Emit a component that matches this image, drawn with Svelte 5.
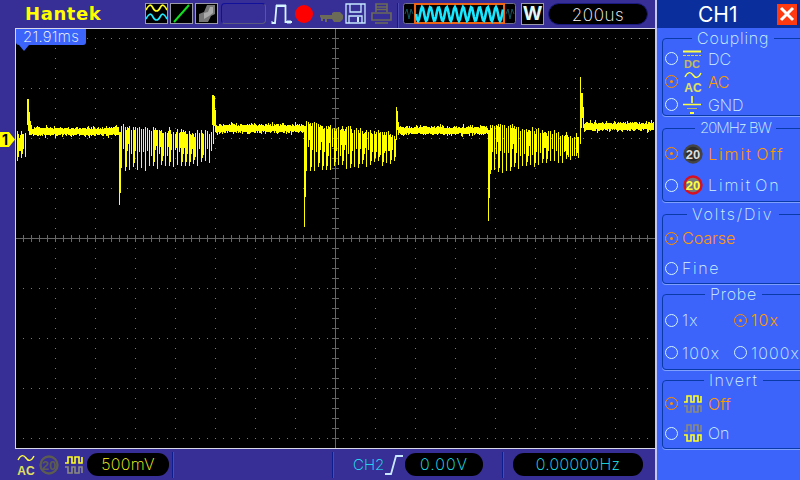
<script>
  // seeded noise so the trace is the same on every load
  let seed = 1234;
  function rnd() {
    seed = (seed * 16807) % 2147483647;
    return seed / 2147483647;
  }

  function col(x, a, b) {
    return `M${x + 0.5} ${a}V${b}`;
  }

  function band(from, to, base) {
    let d = '';
    for (let x = from; x < to; x++) {
      const up = rnd() < 0.25 ? 4 + rnd() * 3 : 3 + rnd() * 2;
      const down = rnd() < 0.18 ? 4 + rnd() * 2 : 2 + rnd() * 2;
      d += col(x, Math.round(base - up), Math.round(base + down));
    }
    return d;
  }

  // ringing after each edge: long teeth about 4px apart, short ones between
  function burst(from, to, topA, topB, botA, botB) {
    let d = '';
    for (let x = from; x < to; x++) {
      const t = (x - from) / (to - from);
      const top = topA + (topB - topA) * t;
      const bot = botA + (botB - botA) * t;
      const phase = (x - from) % 4;
      if (phase === 0) {
        const a = Math.round(top + rnd() * 5);
        const b = Math.round(bot - rnd() * 5);
        d += col(x, a, b);
        if (rnd() < 0.5) d += col(x + 1, a + 3, b - 4);
      }
      if (phase === 2) d += col(x, Math.round(top + rnd() * 7), Math.round((top + bot) / 2 + rnd() * 10));
      if (phase === 3 && rnd() < 0.4) d += col(x, Math.round(top + 4), Math.round(top + 20));
    }
    return d;
  }

  const trace = [
    burst(17, 27, 131, 131, 163, 160),
    col(27, 99, 125), col(28, 99, 131), col(29, 112, 135), col(30, 121, 135), col(31, 125, 135),
    band(32, 119, 132),
    col(119, 132, 205), col(120, 132, 193),
    burst(121, 213, 124, 130, 173, 165),
    col(212, 95, 125), col(213, 95, 144), col(214, 96, 126), col(215, 110, 132),
    band(216, 304, 129),
    col(304, 126, 227), col(305, 126, 197),
    burst(306, 396, 120, 132, 172, 165),
    col(396, 107, 140), col(397, 111, 130), col(398, 122, 135),
    band(399, 488, 131),
    col(488, 130, 221), col(489, 130, 198),
    burst(490, 580, 121, 133, 175, 160),
    col(580, 77, 144), col(581, 93, 128), col(582, 93, 118), col(583, 107, 128),
    band(584, 654, 127)
  ].join('');

  let dots = '';
  for (let y = 38; y < 448; y += 50) {
    for (let x = 23; x < 654; x += 8) dots += `M${x} ${y + 0.5}h1`;
  }
  for (let x = 55; x < 654; x += 40) {
    for (let y = 38; y < 448; y += 10) dots += `M${x} ${y + 0.5}h1`;
  }

  let ticks = '';
  for (let x = 23; x < 654; x += 8) ticks += `M${x + 0.5} 235V242`;
  for (let y = 38; y < 448; y += 10) ticks += `M332 ${y + 0.5}H339`;

  let wave = 'M416 14';
  for (let x = 416; x <= 503; x += 1) {
    wave += `L${x} ${(14 + Math.sin(((x - 416) / 8.2) * Math.PI * 2) * 7).toFixed(1)}`;
  }
</script>

{#snippet invertIcon(top, bottom)}
  <svg width="20" height="20" viewBox="0 0 20 20" fill="none" stroke-width="1.6">
    <path d="M0 8h3V2h4v6h3V2h4v6h3V2" transform="translate(1 0)" stroke={top} />
    <path d="M0 12h3v6h4v-6h3v6h4v-6h3v6" transform="translate(1 0)" stroke={bottom} />
  </svg>
{/snippet}

{#snippet acIcon()}
  <svg width="20" height="24" viewBox="0 0 20 24" fill="none">
    <path d="M2 7C5 1 8 2 10 5S15 9 18 3" stroke="#ffff40" stroke-width="1.4" />
    <text x="10" y="22" class="tiny" fill="#e0e060">AC</text>
  </svg>
{/snippet}

{#snippet badge(ring, fill, ink)}
  <svg width="20" height="20" viewBox="0 0 20 20">
    <circle cx="10" cy="10" r="8.5" fill={fill} stroke={ring} stroke-width="2.4" />
    <text x="10" y="15" class="num" fill={ink}>20</text>
  </svg>
{/snippet}

{#snippet radio(on)}
  <span class="radio" class:on></span>
{/snippet}

<div class="scope">
  <div class="left">
    <header class="topbar">
      <span class="brand">Hantek</span>

      <span class="tool">
        <svg width="21" height="19" viewBox="0 0 21 19" fill="none" stroke-width="1.7">
          <path d="M0 6C3 0 5 0 7 4S12 8 14 4 18 0 21 6" stroke="#ffff20" />
          <path d="M0 15C3 9 5 9 7 13S12 17 14 13 18 9 21 15" stroke="#20e8ff" />
        </svg>
      </span>
      <span class="tool">
        <svg width="21" height="19" viewBox="0 0 21 19" fill="none">
          <path d="M3 18L18 1" stroke="#10e020" stroke-width="2" />
        </svg>
      </span>
      <span class="tool">
        <svg width="21" height="19" viewBox="0 0 21 19">
          <path d="M3 18V10L8 8 11 1H19V10L15 12 12 18Z" fill="#777" />
          <path d="M8 15V9L12 8 14 3H17V9L13 12Z" fill="#aaa" />
        </svg>
      </span>
      <span class="slot"></span>

      <svg class="pulse" width="21" height="21" viewBox="0 0 21 21" fill="none" stroke="#d4f4ff">
        <path d="M1 20H4L5.5 3H14.5V19H21" stroke-width="1.8" />
        <path d="M6 1V3M8 1V3M10 1V3M12 1V3M14 1V3M1 18V21M17 17V21M19 17V21" stroke-width="1" />
      </svg>
      <span class="rec"></span>

      <svg class="key" width="23" height="12" viewBox="0 0 23 12" fill="#6b6b58">
        <path d="M0 4H12V2L14 1H20L23 4V8L20 11H14L12 8H7V11H5V8H3V10H1V7L0 6Z" />
      </svg>
      <svg class="save" width="21" height="21" viewBox="0 0 21 21" fill="none" stroke="#c8e8ff" stroke-width="1.3">
        <path d="M1 1H20V20H1Z" />
        <path d="M5 1V9H16V1M4 20V13H17V20" />
        <path d="M13 14V19" stroke-width="2" />
      </svg>
      <svg class="print" width="21" height="21" viewBox="0 0 21 21" fill="none" stroke="#6b6b58" stroke-width="1.6">
        <path d="M5 9V1H16V9M5 4H16M5 6.5H16" />
        <path d="M1 10H20V17H1ZM4 20H17" />
      </svg>

      <span class="rule"></span>

      <div class="scroller">
        <svg width="113" height="22" viewBox="403 3 113 22" fill="none">
          <rect x="403.5" y="3.5" width="112" height="20" rx="2" fill="#000" stroke="#70708c" />
          <path d="M405 14l2-5 2 10 2-10 2 5M506 14l2-5 2 10 2-10 2 5" stroke="#0f5560" />
          <rect x="415" y="4" width="89" height="19" fill="#000" stroke="#f06414" stroke-width="2" />
          <path d={wave} stroke="#18e8ff" stroke-width="2.6" />
        </svg>
      </div>

      <span class="mode">W</span>
      <span class="pill time">200us</span>
    </header>

    <div class="middle">
      <span class="marker"><b>1</b></span>
      <div class="screen">
        <svg class="plot" width="639" height="419" viewBox="16 29 639 419" shape-rendering="crispEdges" fill="none">
          <path d={dots} stroke="#777" />
          <path d="M16 238.5H655M335.5 29V448" stroke="#666" />
          <path d={ticks} stroke="#666" />
          <path d={trace} stroke="#ffff00" />
        </svg>
        <div class="stamp">21.91ms</div>
      </div>
    </div>

    <footer class="bottombar">
      {@render acIcon()}
      <span class="dim-badge">{@render badge('#5c5c50', 'none', '#5c5c50')}</span>
      {@render invertIcon('#ffff20', '#8a8a80')}
      <span class="pill volts">500mV</span>
      <span class="rule volts-rule"></span>
      <span class="rule trig-rule"></span>
      <span class="ch2">CH2</span>
      <svg class="edge" width="18" height="20" viewBox="0 0 18 20" fill="none" stroke="#c8e8ff" stroke-width="1.8">
        <path d="M0 19H6L11 1H18" />
      </svg>
      <span class="pill level">0.00V</span>
      <span class="rule freq-rule"></span>
      <span class="pill freq">0.00000Hz</span>
    </footer>
  </div>

  <aside class="panel">
    <div class="title">
      <span>CH1</span>
      <button class="close" aria-label="Close">
        <svg width="20" height="20" viewBox="0 0 20 20" stroke="#fff" stroke-width="3">
          <path d="M4 4L16 16M16 4L4 16" />
        </svg>
      </button>
    </div>

    <fieldset class="group coupling">
      <legend>Coupling</legend>
      <div class="row">
        {@render radio(false)}
        <svg class="icon" width="18" height="20" viewBox="0 0 18 20">
          <path d="M0 2.5H18" stroke="#ffff40" stroke-width="2" />
          <path d="M0 6.5H18" stroke="#d8c850" stroke-dasharray="3 1" />
          <text x="9" y="19" class="tiny dc" fill="#c8b860">DC</text>
        </svg>
        <span class="label">DC</span>
      </div>
      <div class="row active">
        {@render radio(true)}
        <span class="icon">{@render acIcon()}</span>
        <span class="label tight">AC</span>
      </div>
      <div class="row">
        {@render radio(false)}
        <svg class="icon" width="18" height="20" viewBox="0 0 18 20" stroke="#ffff40">
          <path d="M9 1V8M0 9.5H18" stroke-width="1.6" />
          <path d="M4 13.5H14" stroke="#b8b870" />
          <path d="M7 18H11" stroke-width="2" />
        </svg>
        <span class="label">GND</span>
      </div>
    </fieldset>

    <fieldset class="group bw">
      <legend>20MHz BW</legend>
      <div class="row active">
        {@render radio(true)}
        <span class="icon">{@render badge('#444', '#2c2c2c', '#ddd')}</span>
        <span class="label wide limit">Limit Off</span>
      </div>
      <div class="row">
        {@render radio(false)}
        <span class="icon">{@render badge('#d81020', '#777', '#ffff40')}</span>
        <span class="label wide limit">Limit On</span>
      </div>
    </fieldset>

    <fieldset class="group volts-div">
      <legend>Volts/Div</legend>
      <div class="row active">
        {@render radio(true)}
        <span class="label flush">Coarse</span>
      </div>
      <div class="row">
        {@render radio(false)}
        <span class="label wide flush">Fine</span>
      </div>
    </fieldset>

    <fieldset class="group probe">
      <legend>Probe</legend>
      <div class="row">
        <span class="cell">{@render radio(false)}<span class="label flush roomy">1x</span></span>
        <span class="cell active">{@render radio(true)}<span class="label flush roomy">10x</span></span>
      </div>
      <div class="row">
        <span class="cell">{@render radio(false)}<span class="label flush roomy">100x</span></span>
        <span class="cell">{@render radio(false)}<span class="label flush roomy">1000x</span></span>
      </div>
    </fieldset>

    <fieldset class="group invert">
      <legend>Invert</legend>
      <div class="row active">
        {@render radio(true)}
        <span class="icon">{@render invertIcon('#ffff20', '#8a8a80')}</span>
        <span class="label near">Off</span>
      </div>
      <div class="row">
        {@render radio(false)}
        <span class="icon">{@render invertIcon('#8a8a80', '#ffff20')}</span>
        <span class="label near">On</span>
      </div>
    </fieldset>
  </aside>
</div>

<style>
  :global(body) {
    margin: 0;
    background: #372e96;
  }

  .scope {
    display: flex;
    width: 800px;
    height: 480px;
    overflow: hidden;
    font-family: Inter, "Liberation Sans", sans-serif;
    font-weight: 200;
    background: #372e96;
  }

  .left {
    width: 655px;
    flex: none;
    display: flex;
    flex-direction: column;
  }

  .topbar {
    height: 28px;
    flex: none;
    display: flex;
    align-items: flex-start;
    padding: 3px 0 0 25px;
    box-sizing: border-box;
  }

  .brand {
    width: 120px;
    height: 22px;
    font-family: "DejaVu Sans", sans-serif;
    font-weight: bold;
    font-size: 18px;
    line-height: 21px;
    letter-spacing: 0.6px;
    color: #ffff00;
  }

  .tool {
    width: 23px;
    height: 21px;
    margin-right: 2px;
    box-sizing: border-box;
    border: 1px solid #9a9aa8;
    background: #000;
    display: flex;
    align-items: center;
    justify-content: center;
  }

  .slot {
    width: 45px;
    height: 21px;
    margin-left: 1px;
    box-sizing: border-box;
    border: 1px solid #10109a;
    border-radius: 4px;
    border-right-color: #5a5a80;
    border-bottom-color: #5a5a80;
  }

  .pulse {
    margin-left: 5px;
  }

  .rec {
    width: 18px;
    height: 18px;
    margin: 2px 0 0 3px;
    border-radius: 50%;
    background: #ff0000;
  }

  .key {
    margin: 8px 0 0 7px;
  }

  .save {
    margin-left: 2px;
  }

  .print {
    margin-left: 5px;
  }

  .rule {
    width: 1px;
    height: 25px;
    margin-left: 5px;
    background: #0a1e90;
    box-shadow: 1px 0 0 #4a4ab0;
  }

  .scroller {
    height: 22px;
    margin-left: 5px;
  }

  .scroller svg {
    display: block;
  }

  .mode {
    width: 23px;
    height: 22px;
    margin-left: 5px;
    box-sizing: border-box;
    border: 1px solid #9a9aa8;
    background: #000;
    color: #e0f8ff;
    font-weight: bold;
    font-size: 19px;
    line-height: 20px;
    text-align: center;
  }

  .pill {
    height: 22px;
    box-sizing: border-box;
    border-radius: 11px;
    background: #000;
    color: #fff;
    font-size: 17px;
    line-height: 22px;
    letter-spacing: 0.6px;
    text-align: center;
  }

  .time {
    width: 100px;
    margin-left: 4px;
    border: 1px solid #1a1a80;
  }

  .middle {
    position: relative;
    flex: 1;
    padding-left: 15px;
    display: flex;
  }

  .marker {
    position: absolute;
    left: 0;
    top: 104px;
    width: 15px;
    height: 15px;
    background: #ffff00;
    clip-path: polygon(0 0, 60% 0, 100% 50%, 60% 100%, 0 100%);
  }

  .marker b {
    display: block;
    margin-left: 2px;
    font-size: 14px;
    font-weight: bold;
    line-height: 15px;
    color: #000;
  }

  .screen {
    position: relative;
    width: 640px;
    height: 421px;
    box-sizing: border-box;
    background: #000;
    border: 1px solid #d8d8e8;
    border-right: none;
  }

  .plot {
    position: absolute;
    left: 0;
    top: 0;
  }

  .stamp {
    position: absolute;
    left: 0;
    top: 0;
    width: 70px;
    height: 16px;
    background: #3c64fa;
    border-radius: 0 0 3px 3px;
    color: #fff;
    font-size: 15px;
    line-height: 16px;
    letter-spacing: 0.3px;
    text-align: center;
  }

  .stamp::after {
    content: "";
    position: absolute;
    left: 3px;
    top: 16px;
    border: 5px solid transparent;
    border-top: 6px solid #3c64fa;
    border-bottom: none;
  }

  .bottombar {
    height: 31px;
    flex: none;
    display: flex;
    align-items: center;
    padding: 0 0 0 16px;
    box-sizing: border-box;
  }

  .dim-badge {
    display: flex;
    margin: 0 5px 0 3px;
  }

  .bottombar .pill {
    height: 23px;
    line-height: 23px;
    color: #1ff0ff;
    font-size: 16px;
    letter-spacing: 0.3px;
  }

  .bottombar .volts {
    width: 82px;
    margin-left: 3px;
    color: #ffff20;
  }

  .bottombar .rule {
    height: 26px;
    margin-left: 3px;
  }

  .bottombar .trig-rule {
    margin-left: 159px;
  }

  .ch2 {
    margin-left: 20px;
    width: 32px;
    color: #1ff0ff;
    font-size: 15px;
  }

  .edge {
    margin-right: 2px;
  }

  .bottombar .level {
    width: 78px;
    letter-spacing: 1px;
  }

  .bottombar .freq-rule {
    margin-left: 19px;
  }

  .bottombar .freq {
    width: 130px;
    margin-left: 10px;
  }

  .panel {
    width: 145px;
    flex: none;
    box-sizing: border-box;
    border-left: 2px solid #c4c8f0;
    background: #3c64fa;
    color: #d4f4ff;
    overflow: hidden;
  }

  .title {
    height: 28px;
    background: #0a2e9c;
    display: flex;
    align-items: center;
    color: #fff;
    font-size: 21px;
    font-weight: 400;
  }

  .title span {
    margin-left: 41px;
    width: 79px;
  }

  .close {
    width: 20px;
    height: 21px;
    padding: 0;
    border: none;
    background: #ff3a10;
    display: flex;
    align-items: center;
    justify-content: center;
  }

  .group {
    margin: 0 0 0 5px;
    padding: 0 0 0 2px;
    width: 150px;
    box-sizing: border-box;
    border: 1px solid #0a3aa8;
    border-radius: 4px;
    box-shadow: 0 1px 0 #7fa0ff;
    display: flex;
    flex-direction: column;
    justify-content: space-around;
  }

  legend {
    margin-left: 27px;
    padding: 0 5px;
    font-size: 16px;
    line-height: 18px;
    letter-spacing: 0.8px;
  }

  .coupling {
    margin-top: 1px;
    height: 87px;
    justify-content: flex-start;
  }

  .bw {
    margin-top: 3px;
    height: 83px;
    padding-top: 1px;
  }

  .bw legend {
    margin-left: 30px;
    font-size: 15px;
    letter-spacing: -1px;
  }

  .volts-div {
    margin-top: 3px;
    height: 79px;
  }

  .volts-div legend {
    margin-left: 22px;
    letter-spacing: 1.9px;
  }

  .probe {
    margin-top: 1px;
    height: 85px;
    padding-top: 1px;
  }

  .probe legend {
    margin-left: 40px;
  }

  .invert {
    margin-top: 1px;
    height: 78px;
  }

  .invert legend {
    margin-left: 39px;
    letter-spacing: 1.4px;
  }

  .row {
    display: flex;
    flex: none;
    align-items: center;
    height: 23px;
  }

  .cell {
    display: flex;
    align-items: center;
    width: 69px;
  }

  .radio {
    width: 13px;
    height: 13px;
    flex: none;
    box-sizing: border-box;
    border: 1px solid #d4f4ff;
    border-radius: 50%;
    display: flex;
    align-items: center;
    justify-content: center;
  }

  .radio.on {
    border-color: #ff9000;
  }

  .radio.on::after {
    content: "";
    width: 3px;
    height: 3px;
    border-radius: 50%;
    background: #ff9000;
  }

  .icon {
    margin-left: 5px;
    display: flex;
    align-items: center;
  }

  .label {
    margin-left: 7px;
    font-size: 16px;
    white-space: nowrap;
  }

  .tight {
    margin-left: 5px;
    letter-spacing: -0.6px;
  }

  .near {
    margin-left: 5px;
  }

  .wide {
    letter-spacing: 1.6px;
    margin-left: 5px;
  }

  .limit {
    word-spacing: -3px;
    letter-spacing: 1.9px;
  }

  .flush {
    margin-left: 4px;
  }

  .roomy {
    letter-spacing: 1.1px;
  }

  .active {
    color: #ff9a00;
    font-weight: 300;
  }

  .tiny {
    font-family: "Liberation Sans", sans-serif;
    font-size: 12px;
    font-weight: bold;
    text-anchor: middle;
  }

  .dc {
    font-size: 11px;
  }

  .num {
    font-family: "Liberation Sans", sans-serif;
    font-size: 13px;
    font-weight: bold;
    text-anchor: middle;
  }
</style>
